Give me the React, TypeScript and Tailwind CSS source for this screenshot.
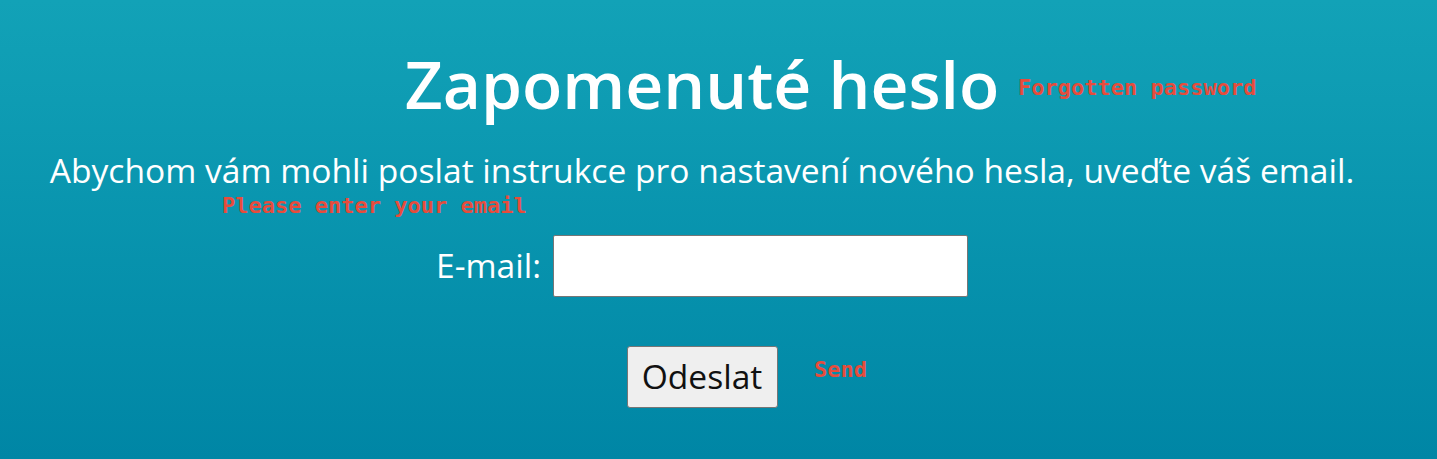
export default function App() {
  return (
    <div
      className="relative h-[459px] w-full overflow-hidden bg-linear-to-b from-[#12a2b7] to-[#0086a5] text-white"
      style={{ fontFamily: '"Open Sans", "Noto Sans", sans-serif' }}>
      <div className="flex flex-col items-center pr-[33px] pt-[50px]">
        <h1 className="text-[66px] font-semibold leading-none">Zapomenuté heslo</h1>
        <p className="mt-[38px] whitespace-nowrap text-[33.6px] leading-none">
          Abychom vám mohli poslat instrukce pro nastavení nového hesla, uveďte váš email.
        </p>
        <div className="mt-[47px] flex items-center gap-[12px]">
          <label htmlFor="email" className="text-[33.6px] leading-none">
            E-mail:
          </label>
          <input
            id="email"
            type="email"
            className="h-[62px] w-[415px] rounded-[2px] border border-[#767676] bg-white px-2 text-[24px] text-black outline-none"
          />
        </div>
        <button
          type="button"
          className="mt-[49px] h-[62px] w-[151px] rounded-[3px] border border-[#767676] bg-[#efefef] text-[33.6px] leading-none text-[#111]">
          Odeslat
        </button>
      </div>

      {/* annotations */}
      <span className="absolute left-[1018px] top-[77px] font-['DejaVu_Sans_Mono',monospace] text-[22px] font-bold leading-none text-[#e74c3c]">
        Forgotten password
      </span>
      <span className="absolute left-[222px] top-[195px] font-['DejaVu_Sans_Mono',monospace] text-[22px] font-bold leading-none text-[#e74c3c]">
        Please enter your email
      </span>
      <span className="absolute left-[814px] top-[359px] font-['DejaVu_Sans_Mono',monospace] text-[22px] font-bold leading-none text-[#e74c3c]">
        Send
      </span>
    </div>
  );
}
